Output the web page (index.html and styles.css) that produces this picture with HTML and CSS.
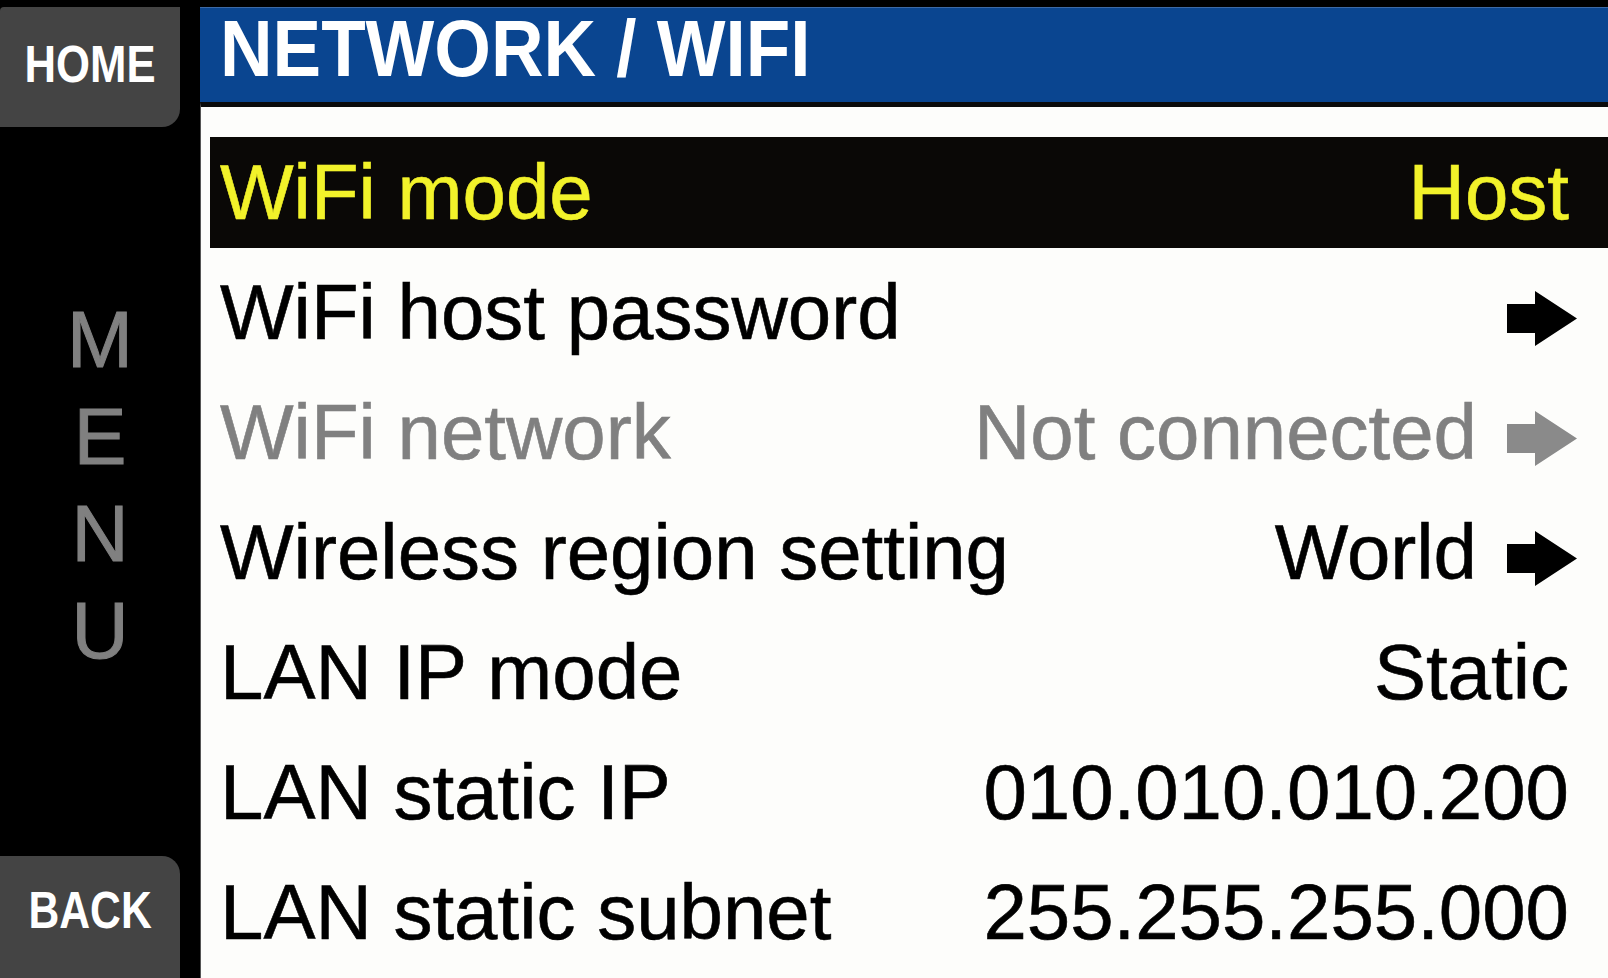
FILE: index.html
```html
<!DOCTYPE html>
<html lang="en">
<head>
<meta charset="utf-8">
<title>NETWORK / WIFI</title>
<link rel="stylesheet" href="styles.css">
</head>
<body>
<div class="screen">
  <aside class="sidebar">
    <div class="btn btn-home"><span class="btn-label">HOME</span></div>
    <div class="menu-letters">
      <span>M</span><span>E</span><span>N</span><span>U</span>
    </div>
    <div class="btn btn-back"><span class="btn-label">BACK</span></div>
  </aside>
  <main class="main">
    <header class="header"><span class="title">NETWORK / WIFI</span></header>
    <div class="list">
      <div class="row selected">
        <span class="label">WiFi mode</span>
        <span class="value plain">Host</span>
      </div>
      <div class="row">
        <span class="label">WiFi host password</span>
        <svg class="arrow" viewBox="0 0 70 55" width="70" height="55"><polygon points="0,13 28,13 28,0 70,27.5 28,55 28,42 0,42"/></svg>
      </div>
      <div class="row disabled">
        <span class="label">WiFi network</span>
        <span class="value-group"><span class="value">Not connected</span><svg class="arrow" viewBox="0 0 70 55" width="70" height="55"><polygon points="0,13 28,13 28,0 70,27.5 28,55 28,42 0,42"/></svg></span>
      </div>
      <div class="row">
        <span class="label">Wireless region setting</span>
        <span class="value-group"><span class="value">World</span><svg class="arrow" viewBox="0 0 70 55" width="70" height="55"><polygon points="0,13 28,13 28,0 70,27.5 28,55 28,42 0,42"/></svg></span>
      </div>
      <div class="row">
        <span class="label">LAN IP mode</span>
        <span class="value plain">Static</span>
      </div>
      <div class="row">
        <span class="label">LAN static IP</span>
        <span class="value plain">010.010.010.200</span>
      </div>
      <div class="row">
        <span class="label">LAN static subnet</span>
        <span class="value plain">255.255.255.000</span>
      </div>
    </div>
  </main>
</div>
</body>
</html>
```
FILE: styles.css
```css
html, body {
  margin: 0;
  padding: 0;
  background: #000;
}

body {
  width: 1608px;
  height: 978px;
  overflow: hidden;
  font-family: "Liberation Sans", Arial, sans-serif;
}

.screen {
  display: grid;
  grid-template-columns: 200px 1fr;
  height: 978px;
  box-sizing: border-box;
  padding-top: 7px;
  background: #000;
}

/* ---------- sidebar ---------- */
.sidebar {
  display: flex;
  flex-direction: column;
  height: 971px;
}

.btn {
  width: 180px;
  background: #444444;
  display: flex;
  align-items: center;
  justify-content: center;
  box-sizing: border-box;
  color: #ffffff;
  font-weight: bold;
  font-size: 52px;
  line-height: 60px;
}

.btn-label {
  display: inline-block;
  transform: scaleX(0.84);
  transform-origin: center;
}

.btn-home {
  height: 120px;
  border-radius: 4px 0 18px 0;
  padding-bottom: 6px;
}

.btn-back {
  height: 122px;
  margin-top: auto;
  border-radius: 0 18px 0 0;
  padding-bottom: 14px;
}

.btn-back .btn-label {
  transform: scaleX(0.82);
}

.menu-letters {
  margin-top: 164px;
  display: flex;
  flex-direction: column;
  align-items: center;
  color: #808080;
  font-size: 79px;
  line-height: 97px;
  -webkit-text-stroke: 1px #808080;
}

/* ---------- main ---------- */
.main {
  display: flex;
  flex-direction: column;
  min-width: 0;
}

.header {
  height: 95px;
  box-sizing: border-box;
  background: #0a4590;
  border-top: 1px solid #3d6aa6;
  padding: 0 0 14px 20px;
  line-height: 81px;
  font-size: 80px;
  font-weight: bold;
  color: #ffffff;
  white-space: nowrap;
}

.title {
  display: inline-block;
  transform: scaleX(0.91);
  transform-origin: left center;
}

.list {
  flex: 1;
  background: #fdfdfb;
  border-top: 5px solid #0b0b0b;
  border-left: 1px solid #555;
  padding: 30px 0 0 9px;
  display: flex;
  flex-direction: column;
  gap: 9px;
}

.row {
  height: 111px;
  display: flex;
  align-items: center;
  justify-content: space-between;
  padding: 0 31px 0 10px;
  font-size: 78px;
  line-height: 111px;
  color: #000000;
  white-space: nowrap;
  -webkit-text-stroke: 0.6px currentColor;
}

.row.selected {
  background: #0a0806;
  color: #f2f22a;
}

.row.disabled {
  color: #808080;
}

.value.plain {
  margin-right: 8px;
}

.value-group {
  display: flex;
  align-items: center;
  gap: 30px;
}

.arrow {
  display: block;
  margin-top: 12px;
  fill: currentColor;
}

.row.disabled .arrow {
  fill: #8a8a8a;
}
```
